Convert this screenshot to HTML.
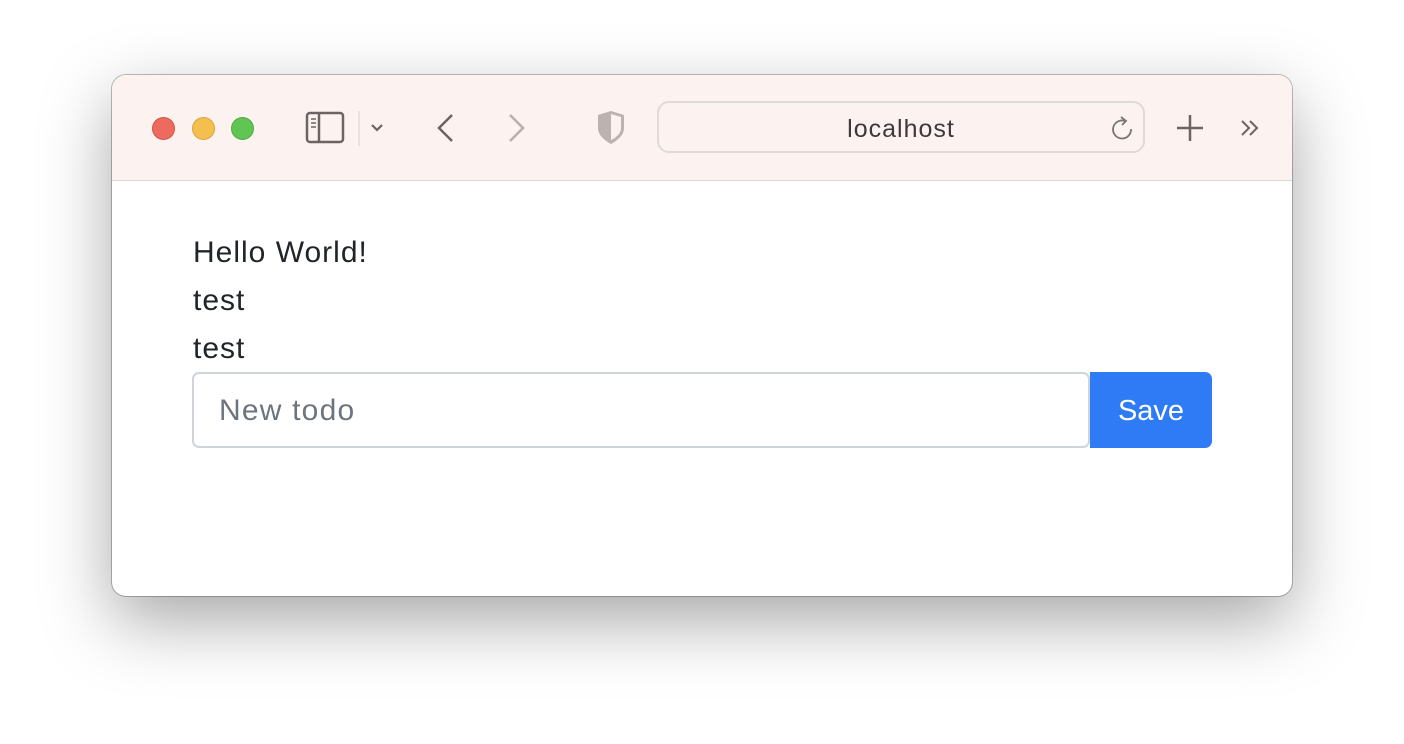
<!DOCTYPE html>
<html><head><style>
body{margin:0;width:1404px;height:744px;background:#fff;position:relative;overflow:hidden;font-family:"Liberation Sans",sans-serif}
.win{position:absolute;left:112px;top:75px;width:1180px;height:521px;border-radius:14px;background:#fff;box-shadow:0 25px 70px rgba(0,0,0,.35),0 0 0 1px rgba(0,0,0,.25);overflow:hidden}
.bar{position:absolute;left:0;top:0;width:100%;height:105px;background:#fcf3f1;border-bottom:1px solid #dcd6d4}
.dot{position:absolute;top:42px;width:23px;height:23px;border-radius:50%}
.url{position:absolute;left:545px;top:26px;width:488px;height:52px;border:2px solid #dedad8;border-radius:12px;box-sizing:border-box;text-align:center;line-height:52px;font-size:25px;letter-spacing:1px;color:#3c3a3a}
.t{position:absolute;left:81px;font-size:30px;letter-spacing:1px;color:#212529}
.inp{position:absolute;left:80px;top:297px;width:898px;height:76px;border:2px solid #ced4da;border-radius:7px;box-sizing:border-box;font-size:30px;letter-spacing:1.2px;color:#6c757d;padding-left:25px;line-height:74px}
.btn{position:absolute;left:978px;top:297px;width:122px;height:76px;background:#2f7bf5;border-radius:0 7px 7px 0;color:#fff;font-size:29px;text-align:center;line-height:78px}
</style></head><body>
<div class="win">
<div class="bar">
<div class="dot" style="left:40px;background:#ec6a5e;border:1px solid #d55447;box-sizing:border-box"></div>
<div class="dot" style="left:80px;background:#f5bf4f;border:1px solid #d9a43c;box-sizing:border-box"></div>
<div class="dot" style="left:119px;background:#61c554;border:1px solid #4ead42;box-sizing:border-box"></div>
<svg style="position:absolute;left:190px;top:36px" width="300" height="36" viewBox="0 0 300 36">
<rect x="5" y="2" width="36" height="29" rx="3" fill="none" stroke="#6b6463" stroke-width="2.5"/>
<line x1="17" y1="2" x2="17" y2="31" stroke="#6b6463" stroke-width="2.5"/>
<path d="M9 8h5M9 12h5M9 16h5" stroke="#6b6463" stroke-width="1.6"/>
<line x1="57" y1="0" x2="57" y2="35" stroke="#ddd" stroke-width="1.5"/>
<path d="M70 14l5 5 5-5" fill="none" stroke="#6b6463" stroke-width="2.2"/>
<path d="M150 4l-13 13 13 13" fill="none" stroke="#6b6463" stroke-width="2.5"/>
<path d="M208 4l13 13-13 13" fill="none" stroke="#b7b0ae" stroke-width="2.5"/>
</svg>
<svg style="position:absolute;left:484px;top:35px" width="30" height="36" viewBox="0 0 30 36">
<path d="M15 1L2 5v13c0 7 6 12 13 16 7-4 13-9 13-16V5z" fill="#bcb3b1"/>
<path d="M15 4l10 3v11c0 5-4 9-10 12z" fill="#fcf3f1"/>
</svg>
<div class="url">localhost</div>
<svg style="position:absolute;left:998px;top:40px" width="24" height="28" viewBox="0 0 24 28">
<path d="M15 6a9 9 0 1 0 6 8" fill="none" stroke="#777" stroke-width="1.8"/>
<path d="M11 2l5 4-4 4" fill="none" stroke="#777" stroke-width="1.8"/>
</svg>
<svg style="position:absolute;left:1062px;top:36px" width="90" height="36" viewBox="0 0 90 36">
<path d="M16 4v26M3 17h26" stroke="#6b6463" stroke-width="2.5"/>
<path d="M68 10l7 7-7 7M76 10l7 7-7 7" fill="none" stroke="#6b6463" stroke-width="2"/>
</svg>
</div>
<div class="t" style="top:161px">Hello World!</div>
<div class="t" style="top:209px">test</div>
<div class="t" style="top:257px">test</div>
<div class="inp">New todo</div>
<div class="btn">Save</div>
</div>
</body></html>
